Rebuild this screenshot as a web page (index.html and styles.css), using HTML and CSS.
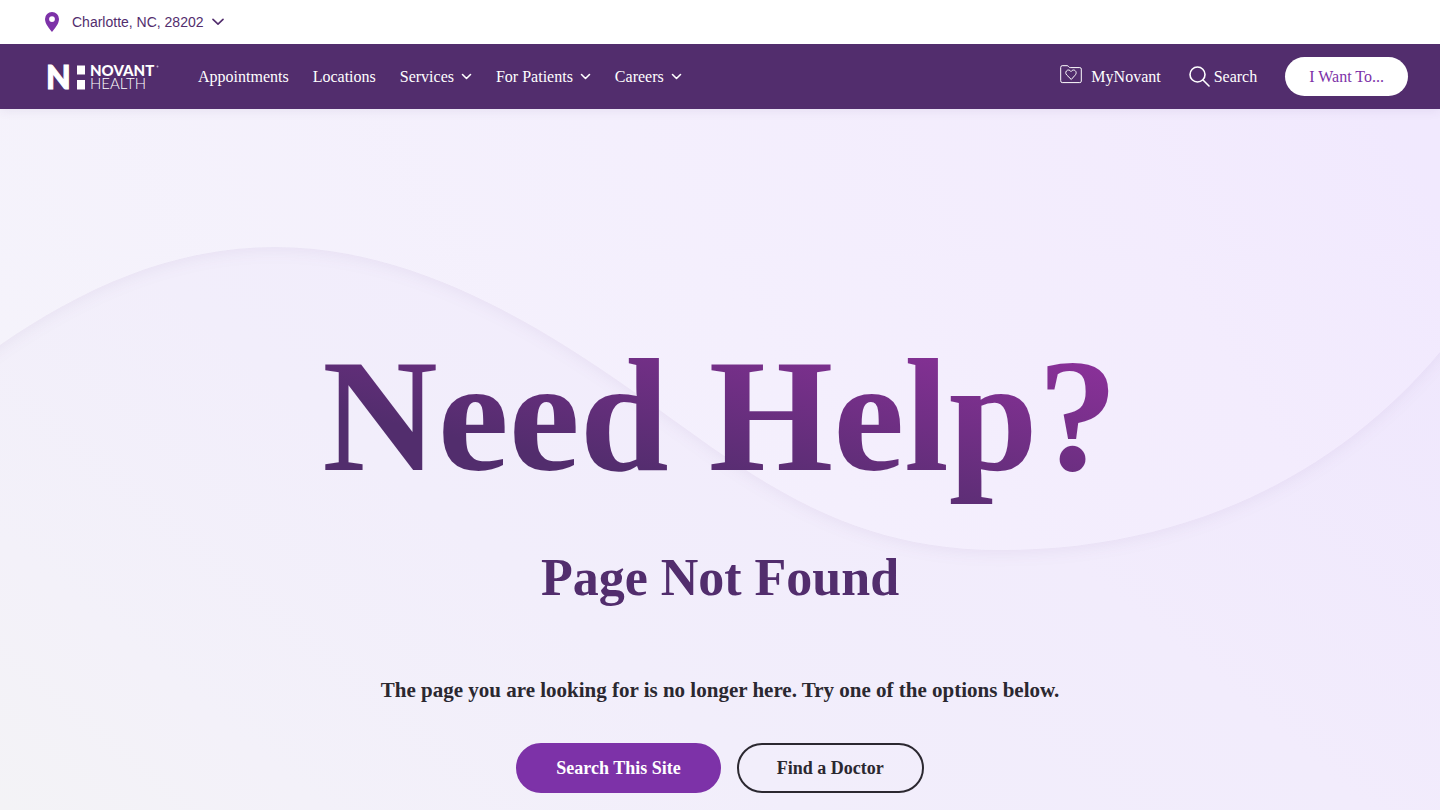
FILE: index.html
```html
<!DOCTYPE html>
<html lang="en">
<head>
<meta charset="utf-8">
<meta name="viewport" content="width=device-width, initial-scale=1">
<title>Page Not Found | Novant Health</title>
<link rel="stylesheet" href="styles.css">
</head>
<body>
<header class="header">
  <div class="location-bar">
    <button class="location" type="button">
      <svg class="location-pin" width="14" height="20" viewBox="0 0 14 20" aria-hidden="true"><path fill-rule="evenodd" d="M7 0a7 7 0 0 0-7 7c0 5 4.500 9.500 7 13 2.500-3.500 7-8 7-13a7 7 0 0 0-7-7zm0 4.200a2.900 2.900 0 1 1 0 5.800 2.900 2.900 0 0 1 0-5.800z"/></svg>
      <span class="location-name">Charlotte, NC, 28202</span>
      <svg class="line-icon" width="12" height="8" viewBox="0 0 12 8" aria-hidden="true"><path stroke-width="1.600" d="M1 1.400 6 6.200l5-4.800"/></svg>
    </button>
  </div>
  <div class="main-bar">
    <a class="logo" href="#" aria-label="Novant Health home">
      <svg width="112" height="26" viewBox="0 0 112 26">
        <text class="logo-mark" x="-1" y="25">N</text>
        <path d="M30 1.500h8v9h-8zM30 16h8v9.500h-8z"/>
        <text class="logo-novant" x="43" y="12">NOVANT</text>
        <text class="logo-health" x="43" y="25">HEALTH</text>
        <circle cx="110.500" cy="2.500" r="1" opacity=".6"/>
      </svg>
    </a>
    <nav class="nav" aria-label="Main">
      <a class="nav-item" href="#">Appointments</a>
      <a class="nav-item" href="#">Locations</a>
      <button class="nav-item" type="button">Services<svg class="line-icon" width="11" height="7" viewBox="0 0 11 7" aria-hidden="true"><path stroke-width="1.600" d="m1.500 1.500 4 4 4-4"/></svg></button>
      <button class="nav-item" type="button">For Patients<svg class="line-icon" width="11" height="7" viewBox="0 0 11 7" aria-hidden="true"><path stroke-width="1.600" d="m1.500 1.500 4 4 4-4"/></svg></button>
      <button class="nav-item" type="button">Careers<svg class="line-icon" width="11" height="7" viewBox="0 0 11 7" aria-hidden="true"><path stroke-width="1.600" d="m1.500 1.500 4 4 4-4"/></svg></button>
    </nav>
    <div class="tools">
      <a class="tool tool-account" href="#">
        <svg class="line-icon folder-icon" width="22" height="23" viewBox="0 0 22 23" aria-hidden="true"><path d="M.700 2.200Q.700.700 2.200.700H7q1 0 1.500.700l.500.700q.400.500 1.200.500h9.600q1.500 0 1.500 1.500v12q0 1.500-1.500 1.500H2.200q-1.500 0-1.500-1.500z"/><path d="M11 14.200 6.700 10C3.800 7 8.200 2.600 11 6.600c2.800-4 7.200.400 4.300 3.400z"/></svg>
        MyNovant
      </a>
      <button class="tool" type="button">
        <svg class="line-icon" width="21" height="21" viewBox="0 0 21 21" aria-hidden="true"><circle cx="8.500" cy="8.500" r="7.500" stroke-width="1.600"/><path stroke-width="1.600" d="m14 14 6 6"/></svg>
        Search
      </button>
      <button class="want-button" type="button">I Want To...</button>
    </div>
  </div>
</header>
<main class="hero">
  <svg class="wave" viewBox="0 0 1440 701" preserveAspectRatio="none" aria-hidden="true">
    <defs>
      <linearGradient id="wave-fill" gradientUnits="userSpaceOnUse" x1="160" y1="520" x2="1300" y2="-140">
        <stop offset="0" stop-color="#f5f3fb"/>
        <stop offset=".5" stop-color="#f4effd"/>
        <stop offset=".8" stop-color="#f3ecfd"/>
        <stop offset="1" stop-color="#f1e9fe"/>
      </linearGradient>
    </defs>
    <path class="wave-shape" fill="url(#wave-fill)" d="M-40-40V264L0 236C80 181 170 138 275 138c185 0 345 138 448 208 77 52 157 95 277 95 190 0 340-78 440-198l40-50V-40z"/>
  </svg>
  <div class="hero-content">
    <h1 class="hero-title">Need Help?</h1>
    <h2 class="hero-subtitle">Page Not Found</h2>
    <p class="hero-text">The page you are looking for is no longer here. Try one of the options below.</p>
    <div class="actions">
      <a class="button button-primary" href="#">Search This Site</a>
      <a class="button button-outline" href="#">Find a Doctor</a>
    </div>
  </div>
</main>
</body>
</html>
```
FILE: styles.css
```css
* {
  box-sizing: border-box;
}

html {
  height: 100%;
}

body {
  display: flex;
  flex-direction: column;
  min-height: 100%;
  margin: 0;
  font-family: "Liberation Serif", "Times New Roman", serif;
  font-size: 16px;
  color: #2b2830;
}

a {
  color: inherit;
  text-decoration: none;
}

button {
  padding: 0;
  border: 0;
  background: none;
  color: inherit;
  font: inherit;
  cursor: pointer;
}

.line-icon {
  fill: none;
  stroke: currentColor;
  stroke-linecap: round;
  stroke-linejoin: round;
  flex: none;
}

.header {
  position: relative;
  z-index: 1;
  box-shadow: 0 2px 10px rgba(82, 45, 109, 0.08);
}

.location-bar {
  display: flex;
  align-items: center;
  height: 44px;
  padding: 0 45px;
  background: #fff;
}

.location {
  display: flex;
  align-items: center;
  color: #522d6d;
  font-family: "Liberation Sans", Arial, sans-serif;
  font-size: 14px;
}

.location-pin {
  margin-right: 13px;
  fill: #7d32a8;
}

.location-name {
  margin-right: 8px;
}

.main-bar {
  display: flex;
  align-items: center;
  height: 65px;
  padding: 0 32px 0 47px;
  background: #522d6d;
  color: #fff;
}

.logo {
  display: flex;
  margin-right: 39px;
}

.logo svg {
  overflow: visible;
  fill: #fff;
  font-family: Lato, sans-serif;
}

.logo-mark {
  stroke: #fff;
  stroke-width: 1px;
  font-size: 32px;
  font-weight: 900;
}

.logo-novant {
  font-size: 15px;
  font-weight: 900;
}

.logo-health {
  font-size: 15px;
  font-weight: 300;
}

.nav {
  display: flex;
  gap: 24px;
}

.nav-item {
  display: flex;
  align-items: center;
  gap: 7px;
  white-space: nowrap;
}

.tools {
  display: flex;
  align-items: center;
  gap: 28px;
  margin-left: auto;
}

.tool {
  display: flex;
  align-items: center;
  gap: 4px;
  white-space: nowrap;
}

.tool-account {
  gap: 9px;
}

.want-button {
  padding: 10px 24px;
  border-radius: 20px;
  background: #fff;
  color: #7d32a8;
  line-height: 19px;
}

.hero {
  position: relative;
  flex: 1;
  overflow: hidden;
  background: linear-gradient(40deg, #f3f3f6 0%, #f3f1f9 14%, #f2eefb 35%, #f2ecfc 60%, #efe7fd 90%);
}

.wave {
  position: absolute;
  inset: 0;
  width: 100%;
  height: 100%;
}

.wave-shape {
  filter: drop-shadow(0 5px 7px rgba(82, 45, 109, 0.05));
}

.hero-content {
  position: relative;
  display: flex;
  flex-direction: column;
  align-items: center;
  padding: 215px 24px 17px;
  text-align: center;
}

.hero-title {
  margin: 0 0 40px;
  background: linear-gradient(12deg, #522d6d 28%, #8e319c 92%);
  background-clip: text;
  -webkit-background-clip: text;
  color: transparent;
  font-size: 160px;
  line-height: 184px;
}

.hero-subtitle {
  margin: 0 0 68px;
  color: #522d6d;
  font-size: 52px;
  line-height: 60px;
}

.hero-text {
  margin: 0 0 39px;
  font-size: 21px;
  font-weight: 700;
  line-height: 28px;
}

.actions {
  display: flex;
  flex-wrap: wrap;
  justify-content: center;
  gap: 16px;
}

.button {
  padding: 13px 38px;
  border: 2px solid #2b2830;
  border-radius: 25px;
  font-size: 18px;
  font-weight: 700;
  line-height: 20px;
}

.button-primary {
  border-color: #7d32a8;
  background: #7d32a8;
  color: #fff;
}
```
